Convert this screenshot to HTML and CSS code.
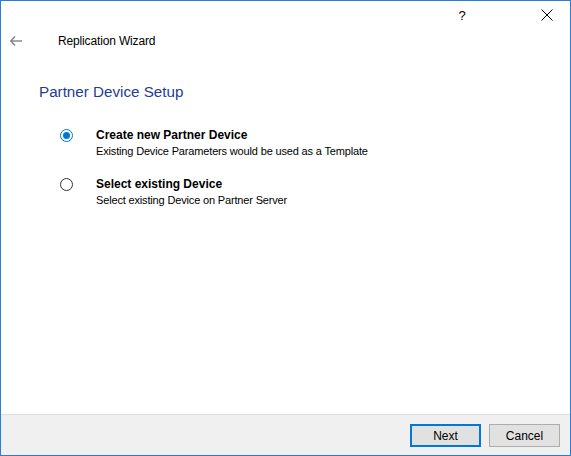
FILE: index.html
```html
<!DOCTYPE html>
<html lang="en">
<head>
<meta charset="utf-8">
<title>Replication Wizard</title>
<link rel="stylesheet" href="styles.css">
</head>
<body>
<div class="window">
  <div class="titlebar">
    <button class="caption-btn help" type="button">?</button>
    <button class="caption-btn close" type="button" aria-label="Close">
      <svg width="12" height="12" viewBox="0 0 12 12"><path d="M0.5 0.5 L11.5 11.5 M11.5 0.5 L0.5 11.5" stroke="#000" stroke-width="1" fill="none"/></svg>
    </button>
  </div>
  <div class="header">
    <span class="back" aria-label="Back">
      <svg width="12" height="10" viewBox="0 0 12 10"><path d="M5 0.5 L0.8 5 L5 9.5 M0.8 5 H12" stroke="#8a8a8a" stroke-width="1.6" fill="none"/></svg>
    </span>
    <span class="wizard-title">Replication Wizard</span>
  </div>
  <div class="content">
    <h1 class="page-title">Partner Device Setup</h1>
    <div class="options">
      <label class="option">
        <span class="radio checked"></span>
        <span class="option-text">
          <span class="option-name">Create new Partner Device</span>
          <span class="option-desc">Existing Device Parameters would be used as a Template</span>
        </span>
      </label>
      <label class="option">
        <span class="radio"></span>
        <span class="option-text">
          <span class="option-name">Select existing Device</span>
          <span class="option-desc">Select existing Device on Partner Server</span>
        </span>
      </label>
    </div>
  </div>
  <div class="footer">
    <button class="btn default" type="button">Next</button>
    <button class="btn" type="button">Cancel</button>
  </div>
</div>
</body>
</html>
```
FILE: styles.css
```css
html, body {
  margin: 0;
  padding: 0;
  background: #fff;
}

body {
  font-family: "Segoe UI", "Liberation Sans", Arial, sans-serif;
  font-size: 12px;
  color: #000;
}

.window {
  width: 571px;
  height: 456px;
  box-sizing: border-box;
  border: 1px solid #2b7cd3;
  display: flex;
  flex-direction: column;
  background: #fff;
}

.titlebar {
  height: 28px;
  display: flex;
  justify-content: flex-end;
  gap: 39px;
}

.caption-btn {
  width: 46px;
  height: 28px;
  border: 0;
  background: transparent;
  padding: 0;
  margin: 0;
  font-family: inherit;
  font-size: 13px;
  color: #000;
  display: flex;
  align-items: center;
  justify-content: center;
}

.header {
  height: 24px;
  display: flex;
  align-items: center;
}

.back {
  width: 57px;
  padding-left: 9px;
  box-sizing: border-box;
  display: flex;
  align-items: center;
}

.wizard-title {
  font-size: 12px;
  letter-spacing: -0.15px;
  color: #000;
}

.content {
  flex: 1;
  padding: 0 0 0 38px;
}

.page-title {
  margin: 27px 0 0 0;
  font-size: 15.2px;
  font-weight: normal;
  color: #1f3d92;
  line-height: 24px;
}

.options {
  margin-top: 23px;
  display: flex;
  flex-direction: column;
  gap: 16px;
}

.option {
  display: flex;
  align-items: flex-start;
}

.radio {
  width: 13px;
  height: 13px;
  box-sizing: border-box;
  border: 1px solid #333;
  border-radius: 50%;
  margin: 2px 0 0 21px;
  position: relative;
  background: #fff;
}

.radio.checked {
  border-color: #0078d7;
}

.radio.checked::after {
  content: "";
  position: absolute;
  left: 2px;
  top: 2px;
  width: 7px;
  height: 7px;
  border-radius: 50%;
  background: #0078d7;
}

.option-text {
  margin-left: 23px;
  display: flex;
  flex-direction: column;
}

.option-name {
  font-weight: bold;
  line-height: 16px;
}

.option-desc {
  font-size: 11px;
  letter-spacing: -0.16px;
  line-height: 17px;
}

.footer {
  height: 41px;
  border-top: 1px solid #dfdfdf;
  background: #f0f0f0;
  display: flex;
  justify-content: flex-end;
  align-items: flex-start;
  gap: 8px;
  padding: 9px 10px 0 0;
  box-sizing: border-box;
}

.btn {
  width: 71px;
  height: 23px;
  box-sizing: border-box;
  border: 1px solid #adadad;
  background: #e1e1e1;
  font-family: inherit;
  font-size: 12px;
  color: #000;
  padding: 0;
  margin: 0;
}

.btn.default {
  border: 2px solid #0078d7;
}
```
